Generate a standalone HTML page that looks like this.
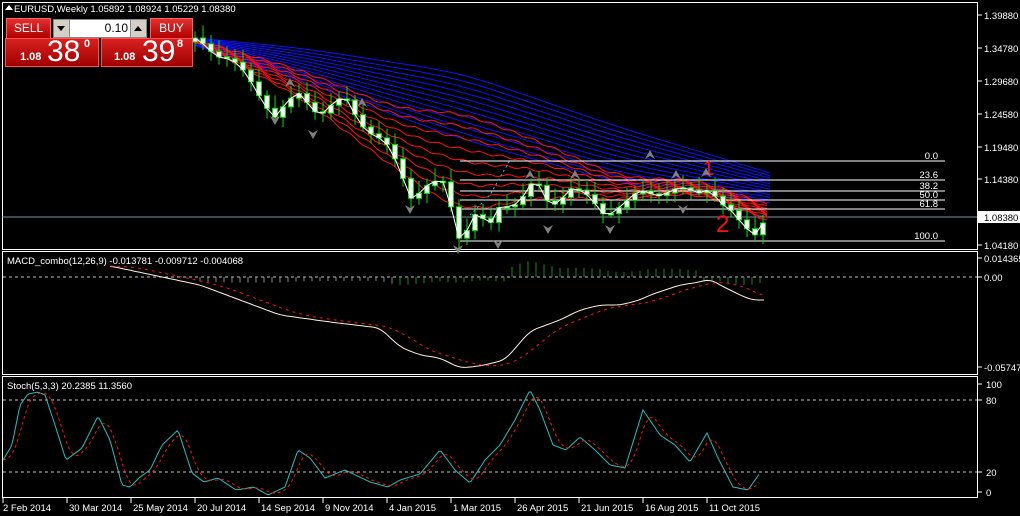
<!DOCTYPE html>
<html><head><meta charset="utf-8"><style>
body{margin:0;background:#000;width:1020px;height:516px;overflow:hidden;font-family:"Liberation Sans",sans-serif}
svg{position:absolute;left:0;top:0}
.tp{position:absolute;font-family:"Liberation Sans",sans-serif;color:#fff}
.btn{position:absolute;background:linear-gradient(#e03030,#b00000);border:1px solid #ff6060;color:#fff;font-size:12px;text-align:center;line-height:19px}
.box{position:absolute;background:linear-gradient(#d82020,#a00000);border:1px solid #ff5050}
.sm{position:absolute;width:15px;height:17px;background:#d4d0c8;border:1px solid #888}
</style></head><body>
<svg id="s" width="1020" height="516" font-family="Liberation Sans, sans-serif" font-size="9.5"></svg>
<div class="btn" style="left:6px;top:18px;width:43px;height:19px">SELL</div>
<div class="sm" style="left:53px;top:19px"><div style="margin:6px 0 0 3px;width:0;height:0;border-left:4px solid transparent;border-right:4px solid transparent;border-top:5px solid #000"></div></div>
<div style="position:absolute;left:69px;top:19px;width:58px;height:17px;background:#fff;border:1px solid #888;font-size:12px;text-align:right;line-height:17px;padding-right:2px">0.10</div>
<div class="sm" style="left:130px;top:19px"><div style="margin:6px 0 0 3px;width:0;height:0;border-left:4px solid transparent;border-right:4px solid transparent;border-bottom:5px solid #000"></div></div>
<div class="btn" style="left:150px;top:18px;width:41px;height:19px">BUY</div>
<div class="box" style="left:5px;top:38px;width:92px;height:27px"></div>
<div class="box" style="left:101px;top:38px;width:90px;height:27px"></div>
<div class="tp" style="left:20px;top:51px;font-size:11px;font-weight:bold">1.08</div>
<div class="tp" style="left:47px;top:36px;font-size:30px;line-height:32px">38</div>
<div class="tp" style="left:84px;top:38px;font-size:11px;font-weight:bold">0</div>
<div class="tp" style="left:114px;top:51px;font-size:11px;font-weight:bold">1.08</div>
<div class="tp" style="left:142px;top:36px;font-size:30px;line-height:32px">39</div>
<div class="tp" style="left:177px;top:38px;font-size:11px;font-weight:bold">8</div>
<script>
const S=document.getElementById('s');let h='';
function P(pts,attr){h+=`<polyline fill="none" points="${pts.map(p=>p[0].toFixed(1)+','+p[1].toFixed(1)).join(' ')}" ${attr}/>`}
function L(x1,y1,x2,y2,a){h+=`<line x1="${x1}" y1="${y1}" x2="${x2}" y2="${y2}" ${a}/>`}
function T(x,y,t,a){h+=`<text x="${x}" y="${y}" ${a||'fill="#fff"'}>${t}</text>`}
function interp(k,x){if(x<=k[0][0])return k[0][1];for(let i=1;i<k.length;i++)if(x<=k[i][0]){const a=k[i-1],b=k[i];return a[1]+(b[1]-a[1])*(x-a[0])/(b[0]-a[0])}return k[k.length-1][1]}
function smooth(k,x,w){let s=0,n=0;for(let d=-w;d<=w;d+=3){s+=interp(k,x+d);n++}return s/n}
h+='<rect x="2.5" y="2.5" width="975" height="247" fill="none" stroke="#fff"/>';
h+='<rect x="2.5" y="251.5" width="975" height="123" fill="none" stroke="#fff"/>';
h+='<rect x="2.5" y="376.5" width="975" height="121" fill="none" stroke="#fff"/>';
[[1.39880,15],[1.34780,48],[1.29680,81],[1.24580,114],[1.19480,147],[1.14380,179],[1.04180,245]].forEach(a=>{L(978,a[1],982,a[1],'stroke="#fff"');T(984,a[1]+4,a[0].toFixed(5))});
h+='<rect x="978" y="211" width="42" height="12" fill="#fff"/>';T(984,221,'1.08380','fill="#000"');
L(2,217,977,217,'stroke="#7f8fa0"');
[['0.014365',258],['0.00',277],['-0.057479',367]].forEach(a=>{L(978,a[1],982,a[1],'stroke="#fff"');T(984,a[1]+4,a[0])});
[['100',384],['80',400],['20',472],['0',492]].forEach(a=>{L(978,a[1],982,a[1],'stroke="#fff"');T(986,a[1]+4,a[0])});
const dates=['2 Feb 2014','30 Mar 2014','25 May 2014','20 Jul 2014','14 Sep 2014','9 Nov 2014','4 Jan 2015','1 Mar 2015','26 Apr 2015','21 Jun 2015','16 Aug 2015','11 Oct 2015'];
dates.forEach((d,i)=>{const x=3+i*64;L(x,498,x,503,'stroke="#fff"');T(x+(i?2:0),511,d)});
T(14,12,'EURUSD,Weekly  1.05892 1.08924 1.05229 1.08380');h+='<polygon points="5,10 9,5 13,10" fill="#fff"/>';
T(7,264,'MACD_combo(12,26,9) -0.013781 -0.009712 -0.004068');
T(7,389,'Stoch(5,3,3) 20.2385 11.3560');
// blue ribbons
for(let i=0;i<12;i++){const k=[[195,38+i*0.7],[300,48+i*3],[460,73+i*6],[620,128+i*5],[770,173+i*2.7]];const pts=[];for(let x=195;x<=770;x+=5)pts.push([x,smooth(k,x,Math.min(40,x-195,770-x))]);P(pts,'stroke="#1010ff"')}
// red ribbons
for(let i=0;i<9;i++){const t=i/8;const k=[[195,42-t*2],[300,97-t*27],[400,172-t*62],[460,212-t*100],[540,197-t*55],[620,200-t*22],[700,192-t*12],[770,222-t*16]];const pts=[];for(let x=195;x<=770;x+=4)pts.push([x,smooth(k,x,Math.min(30,x-195,770-x))+Math.sin(x*0.3+i)*1.2]);P(pts,'stroke="#ff1010"')}
const ck=[[195,42],[230,58],[260,95],[275,115],[300,95],[320,112],[345,100],[360,120],[385,145],[400,170],[410,195],[430,185],[445,185],[460,238],[475,215],[490,228],[500,205],[520,200],[535,183],[550,205],[570,188],[590,200],[605,212],[625,205],[645,190],[660,192],[680,192],[700,190],[710,185],[720,205],[740,222],[757,232],[765,218]];
[['0.0',161],['23.6',180],['38.2',191],['50.0',200],['61.8',209],['100.0',241]].forEach(a=>{L(460,a[1],945,a[1],'stroke="#fff"');T(938,a[1]-2,a[0],'fill="#fff" text-anchor="end"')});
let prev=interp(ck,187),cl=[];
for(let x=195;x<=763;x+=8){const c=interp(ck,x)+Math.sin(x*1.7)*4;const o=prev;const top=Math.min(o,c),bot=Math.max(o,c);L(x,top-5-Math.abs(Math.sin(x))*8,x,bot+4+Math.abs(Math.cos(x))*6,'stroke="#00e000"');h+=`<rect x="${x-2.5}" y="${top}" width="5" height="${Math.max(bot-top,1.5)}" fill="#fff" stroke="#00e000"/>`;cl.push([x,c]);prev=c}
P(cl,'stroke="#fff"');
P([[470,215],[490,195],[510,160]],'stroke="#30c0ff" stroke-dasharray="2,3"');
T(716,232,'2','fill="#ff1010" font-size="24"');T(703,175,'1','fill="#ff1010" font-size="20"');
[[290,78],[362,98],[530,170],[575,170],[650,150],[676,170],[706,168]].forEach(a=>h+=`<polygon points="${a[0]},${a[1]} ${a[0]-5},${a[1]+9} ${a[0]},${a[1]+6} ${a[0]+5},${a[1]+9}" fill="#808080"/>`);
[[275,116],[313,130],[410,205],[498,240],[548,225],[610,225],[683,205],[458,245]].forEach(a=>h+=`<polygon points="${a[0]},${a[1]+9} ${a[0]-5},${a[1]} ${a[0]},${a[1]+3} ${a[0]+5},${a[1]}" fill="#808080"/>`);
// MACD
L(3,277,977,277,'stroke="#c0c0c0" stroke-dasharray="3,3"');
const mk=[[110,266],[200,285],[280,315],[330,322],[380,328],[400,347],[420,355],[440,358],[460,368],[480,366],[505,360],[530,331],[560,320],[580,310],[600,305],[620,305],[640,300],[650,295],[680,285],[700,282],[710,279],[720,285],[740,295],[752,300],[765,300]];
const mm=[],ms=[];for(let x=110;x<=765;x+=3){mm.push([x,smooth(mk,x,6)]);let s=0,n=0;for(let d=0;d<=40;d+=4){s+=interp(mk,x-d);n++}ms.push([x,s/n])}
for(let x=200;x<=763;x+=8){let s=0,n=0;for(let d=0;d<=40;d+=4){s+=interp(mk,x-d);n++}const v=(s/n-interp(mk,x));const hh=x<510?-Math.abs(v)*0.35-3:(x<700?Math.abs(v)*0.6+4:-Math.abs(v)*0.5-3);L(x,277,x,277-hh,'stroke="#'+(x<400?'888':'1a8a1a')+'"')}
P(mm,'stroke="#fff0d8"');P(ms,'stroke="#ff1010" stroke-dasharray="3,4"');
// Stoch
L(3,400,977,400,'stroke="#c0c0c0" stroke-dasharray="3,3"');L(3,472,977,472,'stroke="#c0c0c0" stroke-dasharray="3,3"');
const sk=[[3,460],[12,445],[20,405],[28,394],[38,392],[45,395],[55,425],[66,460],[82,448],[98,416],[110,440],[122,485],[130,487],[140,477],[150,470],[162,445],[178,430],[192,473],[204,482],[218,478],[236,490],[254,487],[268,495],[285,487],[298,450],[310,458],[325,478],[345,470],[370,482],[388,487],[400,480],[420,474],[440,450],[455,470],[470,483],[485,460],[500,445],[515,420],[530,390],[540,410],[553,445],[566,450],[580,437],[595,450],[610,465],[625,468],[643,410],[660,435],[675,445],[690,462],[707,433],[718,458],[733,487],[748,490],[760,473]];
const sm=[],ss=[];for(let x=3;x<=760;x+=2){sm.push([x,interp(sk,x)]);let s=0,n=0;for(let d=0;d<=12;d+=3){s+=interp(sk,x-d);n++}ss.push([x,s/n])}
P(sm,'stroke="#20c0c0"');P(ss,'stroke="#ff1010" stroke-dasharray="3,3"');
S.innerHTML=h;
</script>
</body></html>
